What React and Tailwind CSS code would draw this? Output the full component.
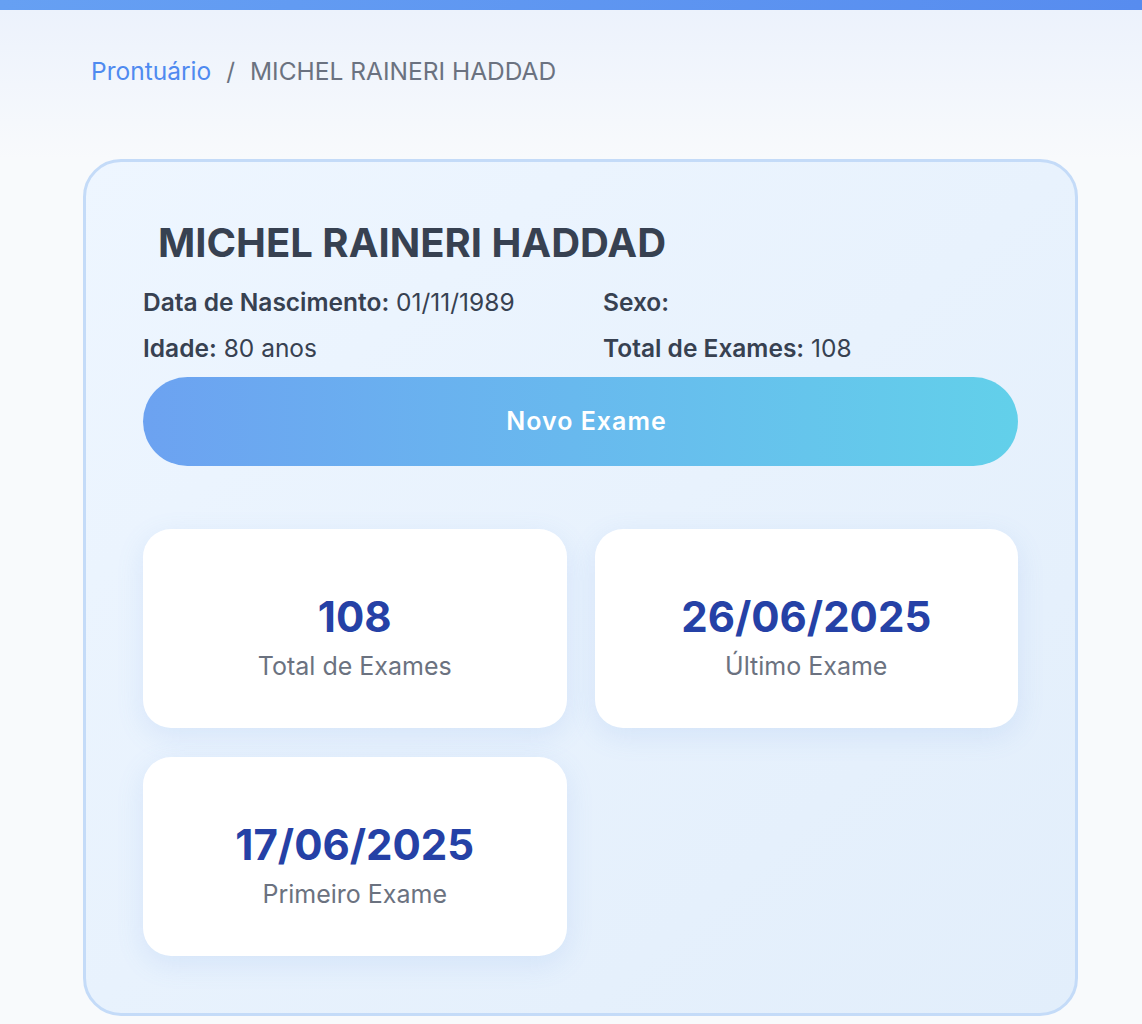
import React from 'react';

function StatCard({ value, label }) {
    return (
        <div className="flex h-[199px] flex-col items-center rounded-[28px] bg-white pt-[63px] shadow-[0_8px_28px_rgba(96,150,230,0.14)]">
            <div className="text-[42px] font-bold leading-[50px] text-[#2541a6]">{value}</div>
            <div className="mt-[6px] text-[25px] leading-[36px] text-[#6b7280]">{label}</div>
        </div>
    );
}

function App() {
    const stats = [
        { value: '108', label: 'Total de Exames' },
        { value: '26/06/2025', label: 'Último Exame' },
        { value: '17/06/2025', label: 'Primeiro Exame' },
    ];

    return (
        <div className="min-h-screen bg-[#f8fafc] font-['Inter',sans-serif]">
            {/* barra superior */}
            <div className="h-[10px] bg-gradient-to-r from-[#66a0f3] to-[#578cef]" />
            <div className="bg-gradient-to-b from-[#ecf2fc] to-[#f8fafc] pb-[70px] pl-[91px] pt-[44px]">
                <nav className="flex items-center text-[24.5px] leading-[35px]">
                    <a href="#!" className="text-[#4f8af0]">Prontuário</a>
                    <span className="mx-[15px] text-[#6b7280]">/</span>
                    <span className="text-[#6b7280]">MICHEL RAINERI HADDAD</span>
                </nav>
            </div>

            <div className="ml-[83px] w-[995px] rounded-[38px] border-[3px] border-[#c4dbf8] bg-gradient-to-br from-[#eef6ff] to-[#e2eefb] px-[57px] pb-[57px] pt-[57px]">
                <h1 className="pl-[15px] text-[40px] font-bold leading-[48px] text-[#374151]">MICHEL RAINERI HADDAD</h1>

                <div className="mt-[18px] grid grid-cols-[460px_1fr] gap-y-[11px] text-[24.5px] leading-[35px] text-[#374151]">
                    <div><span className="font-semibold">Data de Nascimento:</span> 01/11/1989</div>
                    <div><span className="font-semibold">Sexo:</span></div>
                    <div><span className="font-semibold">Idade:</span> 80 anos</div>
                    <div><span className="font-semibold">Total de Exames:</span> 108</div>
                </div>

                <button className="mt-[11px] flex h-[89px] w-full items-center justify-center rounded-full bg-gradient-to-r from-[#6ca2f1] to-[#62d0ea] pl-[12px] text-[25px] font-semibold tracking-[1px] text-white">
                    Novo Exame
                </button>

                <div className="mt-[63px] grid grid-cols-2 gap-x-[28px] gap-y-[29px]">
                    {stats.map((s) => (
                        <StatCard key={s.label} value={s.value} label={s.label} />
                    ))}
                </div>
            </div>
        </div>
    );
}

export default App;
